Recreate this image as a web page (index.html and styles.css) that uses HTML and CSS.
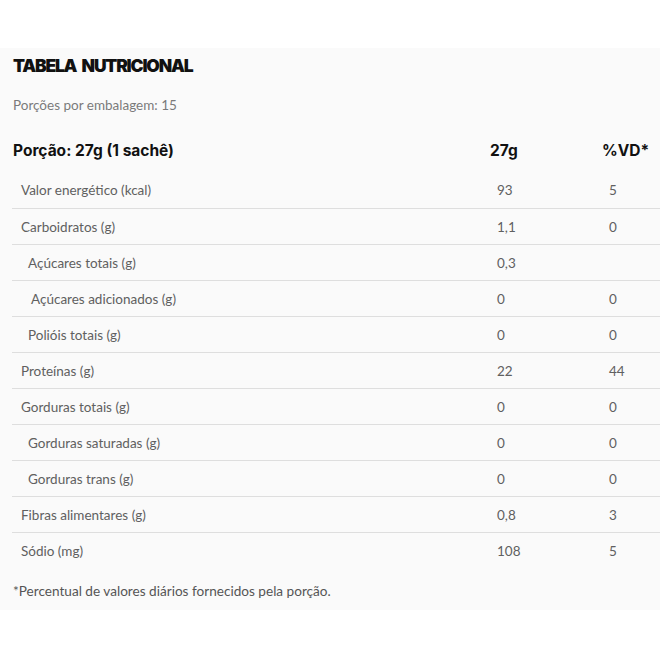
FILE: index.html
```html
<!DOCTYPE html>
<html lang="pt-BR">
<head>
<meta charset="utf-8">
<link rel="stylesheet" href="styles.css">
</head>
<body>
<div class="top-space"></div>
<section class="panel">
  <h1 class="title">TABELA NUTRICIONAL</h1>
  <p class="servings">Porções por embalagem: 15</p>
  <div class="table">
    <div class="row head">
      <div class="name">Porção: 27g (1 sachê)</div>
      <div class="val">27g</div>
      <div class="val">%VD*</div>
    </div>
    <div class="body">
      <div class="row"><div class="name">Valor energético (kcal)</div><div class="val">93</div><div class="val">5</div></div>
      <div class="row"><div class="name">Carboidratos (g)</div><div class="val">1,1</div><div class="val">0</div></div>
      <div class="row"><div class="name sub">Açúcares totais (g)</div><div class="val">0,3</div><div class="val"></div></div>
      <div class="row"><div class="name sub2">Açúcares adicionados (g)</div><div class="val">0</div><div class="val">0</div></div>
      <div class="row"><div class="name sub">Polióis totais (g)</div><div class="val">0</div><div class="val">0</div></div>
      <div class="row"><div class="name">Proteínas (g)</div><div class="val">22</div><div class="val">44</div></div>
      <div class="row"><div class="name">Gorduras totais (g)</div><div class="val">0</div><div class="val">0</div></div>
      <div class="row"><div class="name sub">Gorduras saturadas (g)</div><div class="val">0</div><div class="val">0</div></div>
      <div class="row"><div class="name sub">Gorduras trans (g)</div><div class="val">0</div><div class="val">0</div></div>
      <div class="row"><div class="name">Fibras alimentares (g)</div><div class="val">0,8</div><div class="val">3</div></div>
      <div class="row"><div class="name">Sódio (mg)</div><div class="val">108</div><div class="val">5</div></div>
    </div>
  </div>
  <p class="note">*Percentual de valores diários fornecidos pela porção.</p>
</section>
</body>
</html>
```
FILE: styles.css
```css
html, body {
  margin: 0;
  padding: 0;
  background: #ffffff;
}
body {
  font-family: "Lato", "Open Sans", sans-serif;
  color: #555;
  width: 660px;
  height: 660px;
  overflow: hidden;
}
.top-space {
  height: 48px;
}
.panel {
  background: #fafafa;
  padding: 7px 0 9px 12px;
}
.title {
  margin: 0;
  padding-left: 1px;
  font-family: "Inter", sans-serif;
  font-weight: 900;
  font-size: 17.5px;
  line-height: 22px;
  color: #111;
  letter-spacing: -1.2px;
  word-spacing: 3px;
}
.servings {
  margin: 18px 0 0 1px;
  font-size: 13.5px;
  line-height: 20px;
  color: #7a7a7a;
}
.table {
  margin-top: 17px;
}
.row {
  display: grid;
  grid-template-columns: 485px 112px 1fr;
  height: 36px;
  align-items: center;
  font-size: 13.5px;
  color: #606060;
}
.body .row + .row {
  border-top: 1px solid #dedede;
}
.body .row {
  box-sizing: border-box;
}
.head {
  height: 36px;
  margin-bottom: 4px;
  font-family: "Inter", sans-serif;
  font-size: 15.5px;
  font-weight: 700;
  color: #111;
}
.head .name {
  padding-left: 1px;
}
.head .val {
  margin-left: -7px;
}
.name {
  padding-left: 9px;
}
.name.sub {
  padding-left: 16px;
}
.name.sub2 {
  padding-left: 19px;
}
.note {
  margin: 13px 0 0 1px;
  font-size: 13.6px;
  line-height: 20px;
  color: #555;
}
```
